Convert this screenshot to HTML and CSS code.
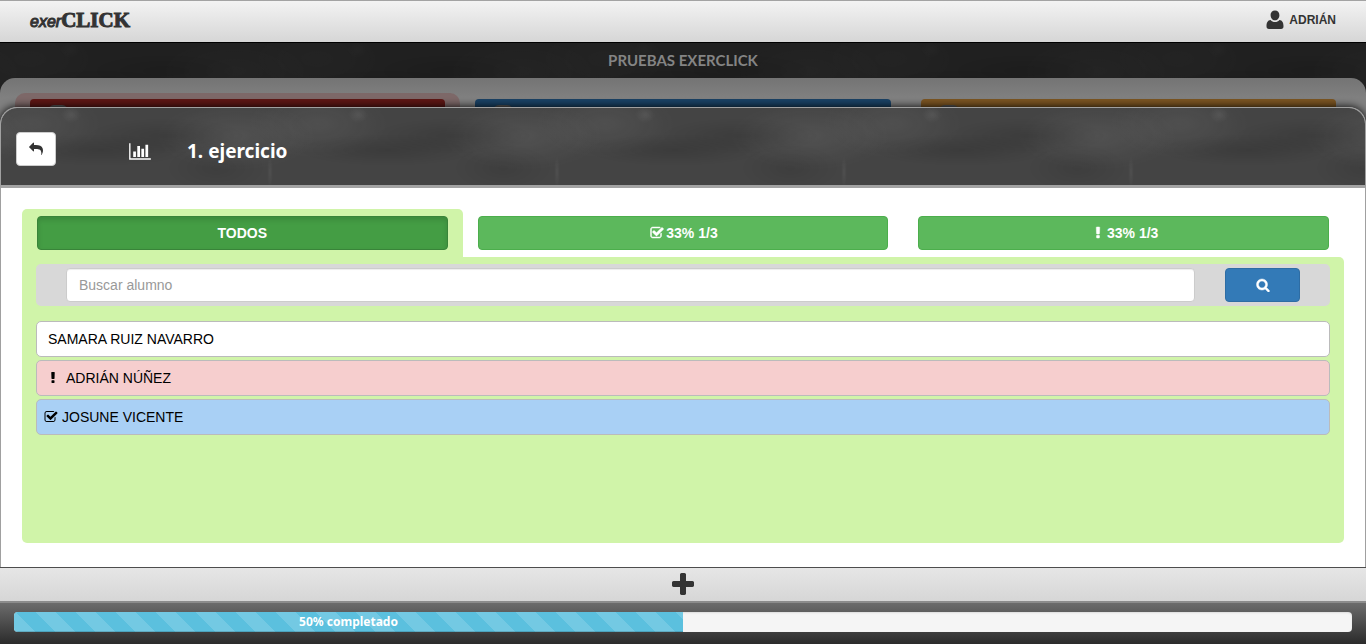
FILE: index.html
```html
<!DOCTYPE html>
<html lang="es">
<head>
<meta charset="utf-8">
<meta name="viewport" content="width=device-width, initial-scale=1">
<title>exerCLICK</title>
<link rel="stylesheet" href="styles.css">
</head>
<body>
<svg class="sprite" aria-hidden="true">
  <symbol id="reply" viewBox="0 0 1792 1792"><path d="M1792 1120q0 166-127 451-3 7-10.500 24t-13.500 30-13 22q-12 17-28 17-15 0-23.500-10t-8.500-25q0-9 2.500-26.500t2.500-23.500q5-68 5-123 0-101-17.500-181t-48.500-138.500-80-101-105.500-69.500-133-42.500-154-21.500-175.500-6h-224v256q0 26-19 45t-45 19-45-19l-512-512q-19-19-19-45t19-45l512-512q19-19 45-19t45 19 19 45v256h224q713 0 875 403 53 134 53 333z"/></symbol>
  <symbol id="chart" viewBox="0 0 2048 1792"><path d="M640 896v512h-256v-512h256zm384-512v1024h-256v-1024h256zm1024 1152v128h-2048v-1536h128v1408h1920zm-640-896v768h-256v-768h256zm384-384v1152h-256v-1152h256z"/></symbol>
  <symbol id="user" viewBox="0 0 18 20"><path d="M9 0.500c2.700 0 4.400 2 4.400 4.700S11.600 10.300 9 10.300 4.600 7.900 4.600 5.200 6.300 0.500 9 0.500zM4.600 9.900c1.100 1.300 2.600 2.100 4.400 2.100s3.300-.8 4.400-2.100c3 .3 4.100 2.600 4.100 6.400 0 1.900-.8 2.700-2.500 2.700H3C1.300 19 .5 18.200 .5 16.300c0-3.800 1.100-6.100 4.100-6.400z"/></symbol>
  <symbol id="check" viewBox="0 0 1792 1792"><path d="M1472 930v318q0 119-84.500 203.500t-203.500 84.500h-832q-119 0-203.500-84.500t-84.500-203.500v-832q0-119 84.500-203.500t203.500-84.500h832q63 0 117 25 15 7 18 23 3 17-9 29l-49 49q-10 10-23 10-3 0-9-2-23-6-45-6h-832q-66 0-113 47t-47 113v832q0 66 47 113t113 47h832q66 0 113-47t47-113v-254q0-13 9-22l64-64q10-10 23-10 6 0 12 3 20 8 20 29zm231-489l-814 814q-24 24-57 24t-57-24l-430-430q-24-24-24-57t24-57l110-110q24-24 57-24t57 24l263 263 647-647q24-24 57-24t57 24l110 110q24 24 24 57t-24 57z"/></symbol>
  <symbol id="bang" viewBox="0 0 1792 1792"><path d="M1088 1248v224q0 26-19 45t-45 19h-256q-26 0-45-19t-19-45v-224q0-26 19-45t45-19h256q26 0 45 19t19 45zm30-1056l-28 768q-1 26-20.500 45t-45.500 19h-256q-26 0-45.500-19t-20.500-45l-28-768q-1-26 17.500-45t44.500-19h320q26 0 44.500 19t17.500 45z"/></symbol>
  <symbol id="search" viewBox="0 0 1792 1792"><path d="M1216 832q0-185-131.500-316.500t-316.500-131.500-316.500 131.500-131.500 316.500 131.500 316.500 316.500 131.500 316.500-131.500 131.500-316.500zm512 832q0 52-38 90t-90 38q-54 0-90-38l-343-342q-179 124-399 124-143 0-273.500-55.500t-225-150-150-225-55.500-273.500 55.500-273.500 150-225 225-150 273.500-55.500 273.500 55.500 225 150 150 225 55.500 273.500q0 220-124 399l343 343q37 37 37 90z"/></symbol>
  <symbol id="plus" viewBox="0 0 1792 1792"><path d="M1600 736v192q0 40-28 68t-68 28h-416v416q0 40-28 68t-68 28h-192q-40 0-68-28t-28-68v-416h-416q-40 0-68-28t-28-68v-192q0-40 28-68t68-28h416v-416q0-40 28-68t68-28h192q40 0 68 28t28 68v416h416q40 0 68 28t28 68z"/></symbol>
</svg>

<header class="topbar">
  <a class="logo" href="#"><span class="logo-hand">exer</span><span class="logo-slab">CLICK</span></a>
  <a class="account" href="#"><svg class="icon-user" aria-hidden="true"><use href="#user"/></svg>ADRIÁN</a>
</header>

<main class="stage">
  <h1 class="course slate slate-dim">PRUEBAS EXERCLICK</h1>
  <div class="board" aria-hidden="true">
    <div class="slot slot-selected"><div class="card card-red"><span class="knob"></span></div></div>
    <div class="slot"><div class="card card-blue"><span class="knob"></span></div></div>
    <div class="slot"><div class="card card-orange"><span class="knob"></span></div></div>
  </div>

  <section class="dialog" role="dialog" aria-labelledby="exercise-title">
    <div class="dialog-head slate">
      <button class="back" type="button" aria-label="Volver"><svg class="icon" aria-hidden="true"><use href="#reply"/></svg></button>
      <svg class="icon-chart" aria-hidden="true"><use href="#chart"/></svg>
      <h2 class="exercise" id="exercise-title">1. ejercicio</h2>
    </div>
    <div class="dialog-body">
      <div class="tabs">
        <div class="tab tab-active"><button class="filter filter-active" type="button">TODOS</button></div>
        <div class="tab"><button class="filter" type="button"><svg class="icon icon-wide" aria-hidden="true"><use href="#check"/></svg>33% 1/3</button></div>
        <div class="tab"><button class="filter" type="button"><svg class="icon icon-wide" aria-hidden="true"><use href="#bang"/></svg>33% 1/3</button></div>
      </div>
      <div class="panel">
        <form class="search">
          <input class="search-input" type="text" placeholder="Buscar alumno" aria-label="Buscar alumno">
          <button class="search-button" type="button" aria-label="Buscar"><svg class="icon" aria-hidden="true"><use href="#search"/></svg></button>
        </form>
        <ul class="students">
          <li class="student"><span class="name">SAMARA RUIZ NAVARRO</span></li>
          <li class="student student-alert"><svg class="icon icon-wide" aria-hidden="true"><use href="#bang"/></svg><span class="name">ADRIÁN NÚÑEZ</span></li>
          <li class="student student-done"><svg class="icon" aria-hidden="true"><use href="#check"/></svg><span class="name">JOSUNE VICENTE</span></li>
        </ul>
      </div>
    </div>
  </section>
</main>

<button class="add" type="button" aria-label="Añadir"><svg class="icon-plus" aria-hidden="true"><use href="#plus"/></svg></button>
<footer class="status">
  <div class="progress" role="progressbar" aria-valuenow="50" aria-valuemin="0" aria-valuemax="100">
    <div class="progress-fill" style="width:50%">50% completado</div>
  </div>
</footer>
</body>
</html>
```

FILE: styles.css
```css
* { box-sizing: border-box; }
body {
  margin: 0;
  min-height: 100vh;
  display: flex;
  flex-direction: column;
  background: #808080;
  color: #000;
  font: 14px/20px "Liberation Sans", Arial, sans-serif;
}
h1, h2, ul { margin: 0; padding: 0; }
a { color: inherit; text-decoration: none; }
button, input { font: inherit; margin: 0; }
button { cursor: pointer; }
svg { fill: currentColor; flex: none; }
.sprite { position: absolute; width: 0; height: 0; }
.icon { width: 14px; height: 14px; }
.icon-wide { width: 18px; }

.topbar {
  display: flex;
  justify-content: space-between;
  align-items: center;
  min-height: 43px;
  padding: 0 30px 4px;
  border-top: 1px solid #a3a3a3;
  border-bottom: 1px solid #000;
  background: linear-gradient(#f3f3f3, #d6d6d6);
  color: #333;
}
.logo { display: flex; align-items: baseline; }
.logo-hand { font-style: italic; font-size: 16px; -webkit-text-stroke: 1px #333; }
.logo-slab { font: bold 21px/24px "Liberation Serif", "Times New Roman", serif; -webkit-text-stroke: 1px #333; }
.account {
  display: flex;
  align-items: center;
  gap: 5px;
  font: bold 12px/20px "Liberation Sans", sans-serif;
}
.icon-user { width: 18px; height: 20px; }

.slate {
  background-color: #444;
  background-image:
    radial-gradient(ellipse 10px 8px at 70px 7px, rgba(255,255,255,.07), transparent),
    radial-gradient(ellipse 90px 16px at 100px 42px, rgba(0,0,0,.13), transparent),
    radial-gradient(ellipse 80px 18px at 165px 28px, rgba(0,0,0,.12), transparent),
    radial-gradient(ellipse 80px 34px at 235px 28px, rgba(255,255,255,.07), transparent),
    radial-gradient(ellipse 80px 34px at -52px 28px, rgba(255,255,255,.07), transparent),
    radial-gradient(ellipse 70px 34px at 30px 16px, rgba(255,255,255,.06), transparent),
    radial-gradient(ellipse 70px 34px at 317px 16px, rgba(255,255,255,.06), transparent),
    radial-gradient(ellipse 50px 24px at 215px 60px, rgba(0,0,0,.09), transparent),
    radial-gradient(ellipse 3px 16px at 269px 64px, rgba(255,255,255,.06), transparent);
  background-size: 287px 77px;
}
.slate-dim { background-color: #202020; background-blend-mode: soft-light; }

.stage {
  position: relative;
  flex: 1;
  display: flex;
  flex-direction: column;
  min-height: 524px;
  overflow: hidden;
  background: #222;
}
.course {
  padding: 7px 0 28px;
  margin-bottom: -20px;
  color: #848484;
  font: bold 15px/20px Lato, sans-serif;
  text-align: center;
}
.board {
  flex: 1;
  display: grid;
  grid-template-columns: repeat(3, 1fr);
  padding: 15px 15px 0;
  border-radius: 15px 15px 0 0;
  background: linear-gradient(#747474, #808080 20px);
}
.slot { padding: 6px 15px 0; border-radius: 10px 10px 0 0; }
.slot-selected { background: #7d6868; }
.card { height: 60px; padding: 6px 18px; border-radius: 4px 4px 0 0; }
.card-red { background: #5e1715; }
.card-blue { background: #1a4265; }
.card-orange { background: #7c5522; }
.knob { display: block; width: 20px; height: 20px; border-radius: 6px; background: #555; }

.dialog {
  position: absolute;
  inset: 64px 0 0;
  display: flex;
  flex-direction: column;
  border: 1px solid #a0a0a0;
  border-bottom: 0;
  border-radius: 17px 17px 0 0;
  background: #fff;
  box-shadow: 0 0 8px #000;
}
.dialog-head {
  display: flex;
  align-items: center;
  min-height: 80px;
  padding: 4px 15px 0;
  border-bottom: 3px solid #a3a3a3;
  border-radius: 16px 16px 0 0;
  color: #fff;
}
.back {
  display: flex;
  align-items: center;
  justify-content: center;
  width: 40px;
  height: 34px;
  border: 1px solid #ccc;
  border-radius: 4px;
  background: #fff;
  color: #333;
}
.icon-chart { width: 22px; height: 19px; margin: 5px 36px 0 73px; }
.exercise { font: bold 19px/20px "Noto Sans", sans-serif; padding-top: 4px; }

.dialog-body { flex: 1; display: flex; flex-direction: column; padding: 21px 21px 24px; }
.tabs { display: grid; grid-template-columns: repeat(3, 1fr); }
.tab { padding: 7px 15px; }
.tab-active { background: #d0f4a9; border-radius: 5px 5px 0 0; }
.filter {
  display: flex;
  align-items: center;
  justify-content: center;
  width: 100%;
  height: 34px;
  border: 1px solid #4cae4c;
  border-radius: 4px;
  background: #5cb85c;
  color: #fff;
  font-weight: bold;
}
.filter-active { background: #449d44; border-color: #398439; box-shadow: inset 0 3px 5px rgba(0,0,0,.125); }
.filter .icon, .search-button .icon { stroke: currentColor; stroke-width: 60px; }
.panel { flex: 1; padding: 7px 14px; background: #d0f4a9; border-radius: 0 5px 5px 5px; }
.search {
  display: flex;
  gap: 30px;
  padding: 4px 30px;
  margin-bottom: 15px;
  border-radius: 5px;
  background: #d8d8d8;
}
.search-input {
  flex: 1;
  min-width: 0;
  height: 34px;
  padding: 6px 12px;
  border: 1px solid #ccc;
  border-radius: 4px;
  background: #fff;
  box-shadow: inset 0 1px 1px rgba(0,0,0,.075);
}
.search-input::placeholder { color: #999; opacity: 1; }
.search-button {
  display: flex;
  align-items: center;
  justify-content: center;
  width: 75px;
  border: 1px solid #2e6da4;
  border-radius: 4px;
  background: #337ab7;
  color: #fff;
}
.students { display: grid; gap: 3px; list-style: none; }
.student {
  display: flex;
  align-items: center;
  min-height: 36px;
  padding: 0 7px;
  border: 1px solid #bbb;
  border-radius: 5px;
  background: #fff;
}
.student-alert { background: #f6cece; }
.student-done { background: #a9d0f5; }
.name { margin-left: 4px; }

.add {
  display: flex;
  align-items: center;
  justify-content: center;
  height: 36px;
  padding: 0;
  border: 0;
  border-top: 1px solid #4d4d4d;
  border-bottom: 2px solid #8c8c8c;
  background: linear-gradient(#e6e6e6, #d6d6d6);
  color: #333;
}
.icon-plus { width: 28px; height: 28px; }
.status { padding: 9px 14px 12px; background: linear-gradient(#6c6c6c, #2b2b2b); }
.progress {
  height: 20px;
  overflow: hidden;
  border-radius: 4px;
  background: #f5f5f5;
  box-shadow: inset 0 1px 2px rgba(0,0,0,.1);
}
.progress-fill {
  height: 100%;
  background: #5bc0de linear-gradient(45deg, rgba(255,255,255,.15) 25%, transparent 25%, transparent 50%, rgba(255,255,255,.15) 50%, rgba(255,255,255,.15) 75%, transparent 75%) 22px 0 / 40px 40px;
  box-shadow: inset 0 -1px 0 rgba(0,0,0,.15);
  color: #fff;
  font: bold 12px/20px "Noto Sans", sans-serif;
  text-align: center;
}
```
